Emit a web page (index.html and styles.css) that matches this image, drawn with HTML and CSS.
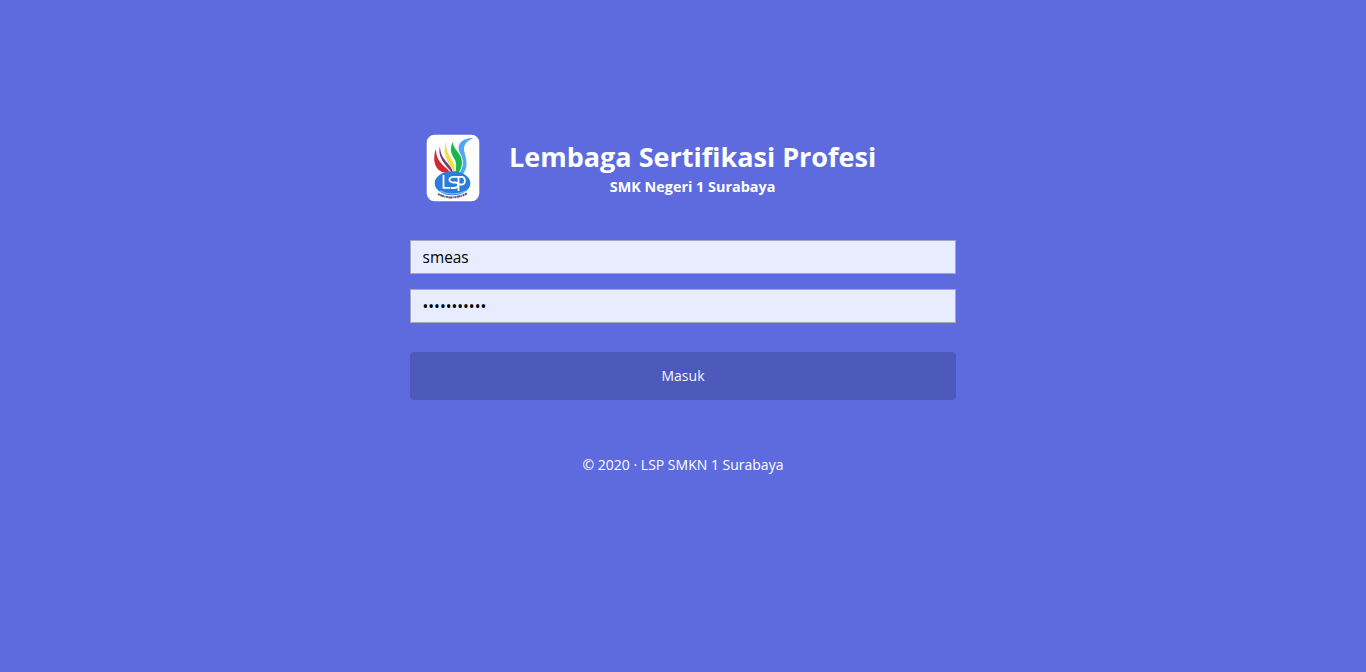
FILE: index.html
```html
<!DOCTYPE html>
<html lang="id">
<head>
<meta charset="utf-8">
<title>Lembaga Sertifikasi Profesi</title>
<link rel="stylesheet" href="styles.css">
</head>
<body>
<main class="login">
  <header class="brand">
    <svg class="logo" viewBox="0 0 54 68" role="img" aria-label="LSP">
      <rect x=".7" y=".7" width="52.6" height="66.6" rx="8" fill="#fff"/>
      <path d="M10 15C7 22 7 34 16 38L25 40.5C23 33 10 31 10 15Z" fill="#d42830"/>
      <path d="M14 12C11 24 20 31 27 40C27 30 14 27 14 12Z" fill="#813a72"/>
      <path d="M20 7C15 22 24 29 28 39C32 27 19 23 20 7Z" fill="#f0df4c"/>
      <path d="M28 6C22 15 26 21 29 26C31 31 30 35 29 40H32C38 31 37 24 31 17C27 12 26 9 28 6Z" fill="#18b94b"/>
      <path d="M47.5 4C35 4 30 11 34 19C39 28 37 35 32 41H36C42 35 41 28 39 20C36 12 40 7 47.5 4Z" fill="#52a7f5"/>
      <ellipse cx="26.5" cy="49.2" rx="17.8" ry="12" fill="#2c7ddb"/>
      <path d="M14 57Q26 63 40 57" fill="none" stroke="#acd4ff" stroke-width=".8"/>
      <path d="M17.5 41V53.8H24.5M34 42.8H28C22 42.8 22 48.5 27.5 48.5H29C34 48.5 33 54 28 54H25M32.5 57V42.8H35.5C40 42.8 40 50.5 35.5 50.5H32.5" fill="none" stroke="#fff" stroke-width="1.8"/>
      <path d="M12 60Q26 67 41 59.5" fill="none" stroke="#586377" stroke-width="2" stroke-dasharray="2 .4 4 .4 1 .6"/>
    </svg>
    <div class="heading">
      <h1 class="title">Lembaga Sertifikasi Profesi</h1>
      <p class="school">SMK Negeri 1 Surabaya</p>
    </div>
  </header>
  <form class="form">
    <input class="field" type="text" value="smeas" aria-label="Username">
    <input class="field" type="password" value="abcdefghijk" aria-label="Password">
    <button class="submit" type="button">Masuk</button>
  </form>
  <footer class="copyright">© 2020 · LSP SMKN 1 Surabaya</footer>
</main>
</body>
</html>
```

FILE: styles.css
```css
* { box-sizing: border-box; }
body {
  margin: 0;
  min-height: 100vh;
  background: #5d6bde;
  color: #fff;
  font: 14px/20px "Open Sans", sans-serif;
}
.login {
  width: 546px;
  margin: 0 auto;
  padding-top: 134px;
}
.brand {
  display: flex;
  height: 68px;
  padding-left: 16px;
}
.logo {
  width: 54px;
  height: 68px;
  flex: none;
}
.heading {
  margin-left: 29px;
  padding-top: 4px;
  text-align: center;
  white-space: nowrap;
}
.title {
  margin: 0;
  font-size: 27px;
  line-height: 38px;
  font-weight: 700;
}
.school {
  margin: 1px 0 0;
  font-size: 14.4px;
  font-weight: 700;
}
.form {
  display: flex;
  flex-direction: column;
  margin-top: 38px;
}
.field {
  width: 100%;
  height: 34px;
  margin: 0 0 15px;
  padding: 0 11.55px;
  border: 1px solid #a6a9b9;
  border-radius: 0;
  background: #e7edff;
  color: #000;
  font: 15.4px "Open Sans", sans-serif;
  outline: none;
}
.submit {
  height: 48px;
  margin-top: 14px;
  border: 0;
  border-radius: 4px;
  background: #4e59bc;
  color: #f5f6ff;
  font: 14px/20px "Open Sans", sans-serif;
}
.copyright {
  margin-top: 55px;
  text-align: center;
  color: #fff;
}
```
